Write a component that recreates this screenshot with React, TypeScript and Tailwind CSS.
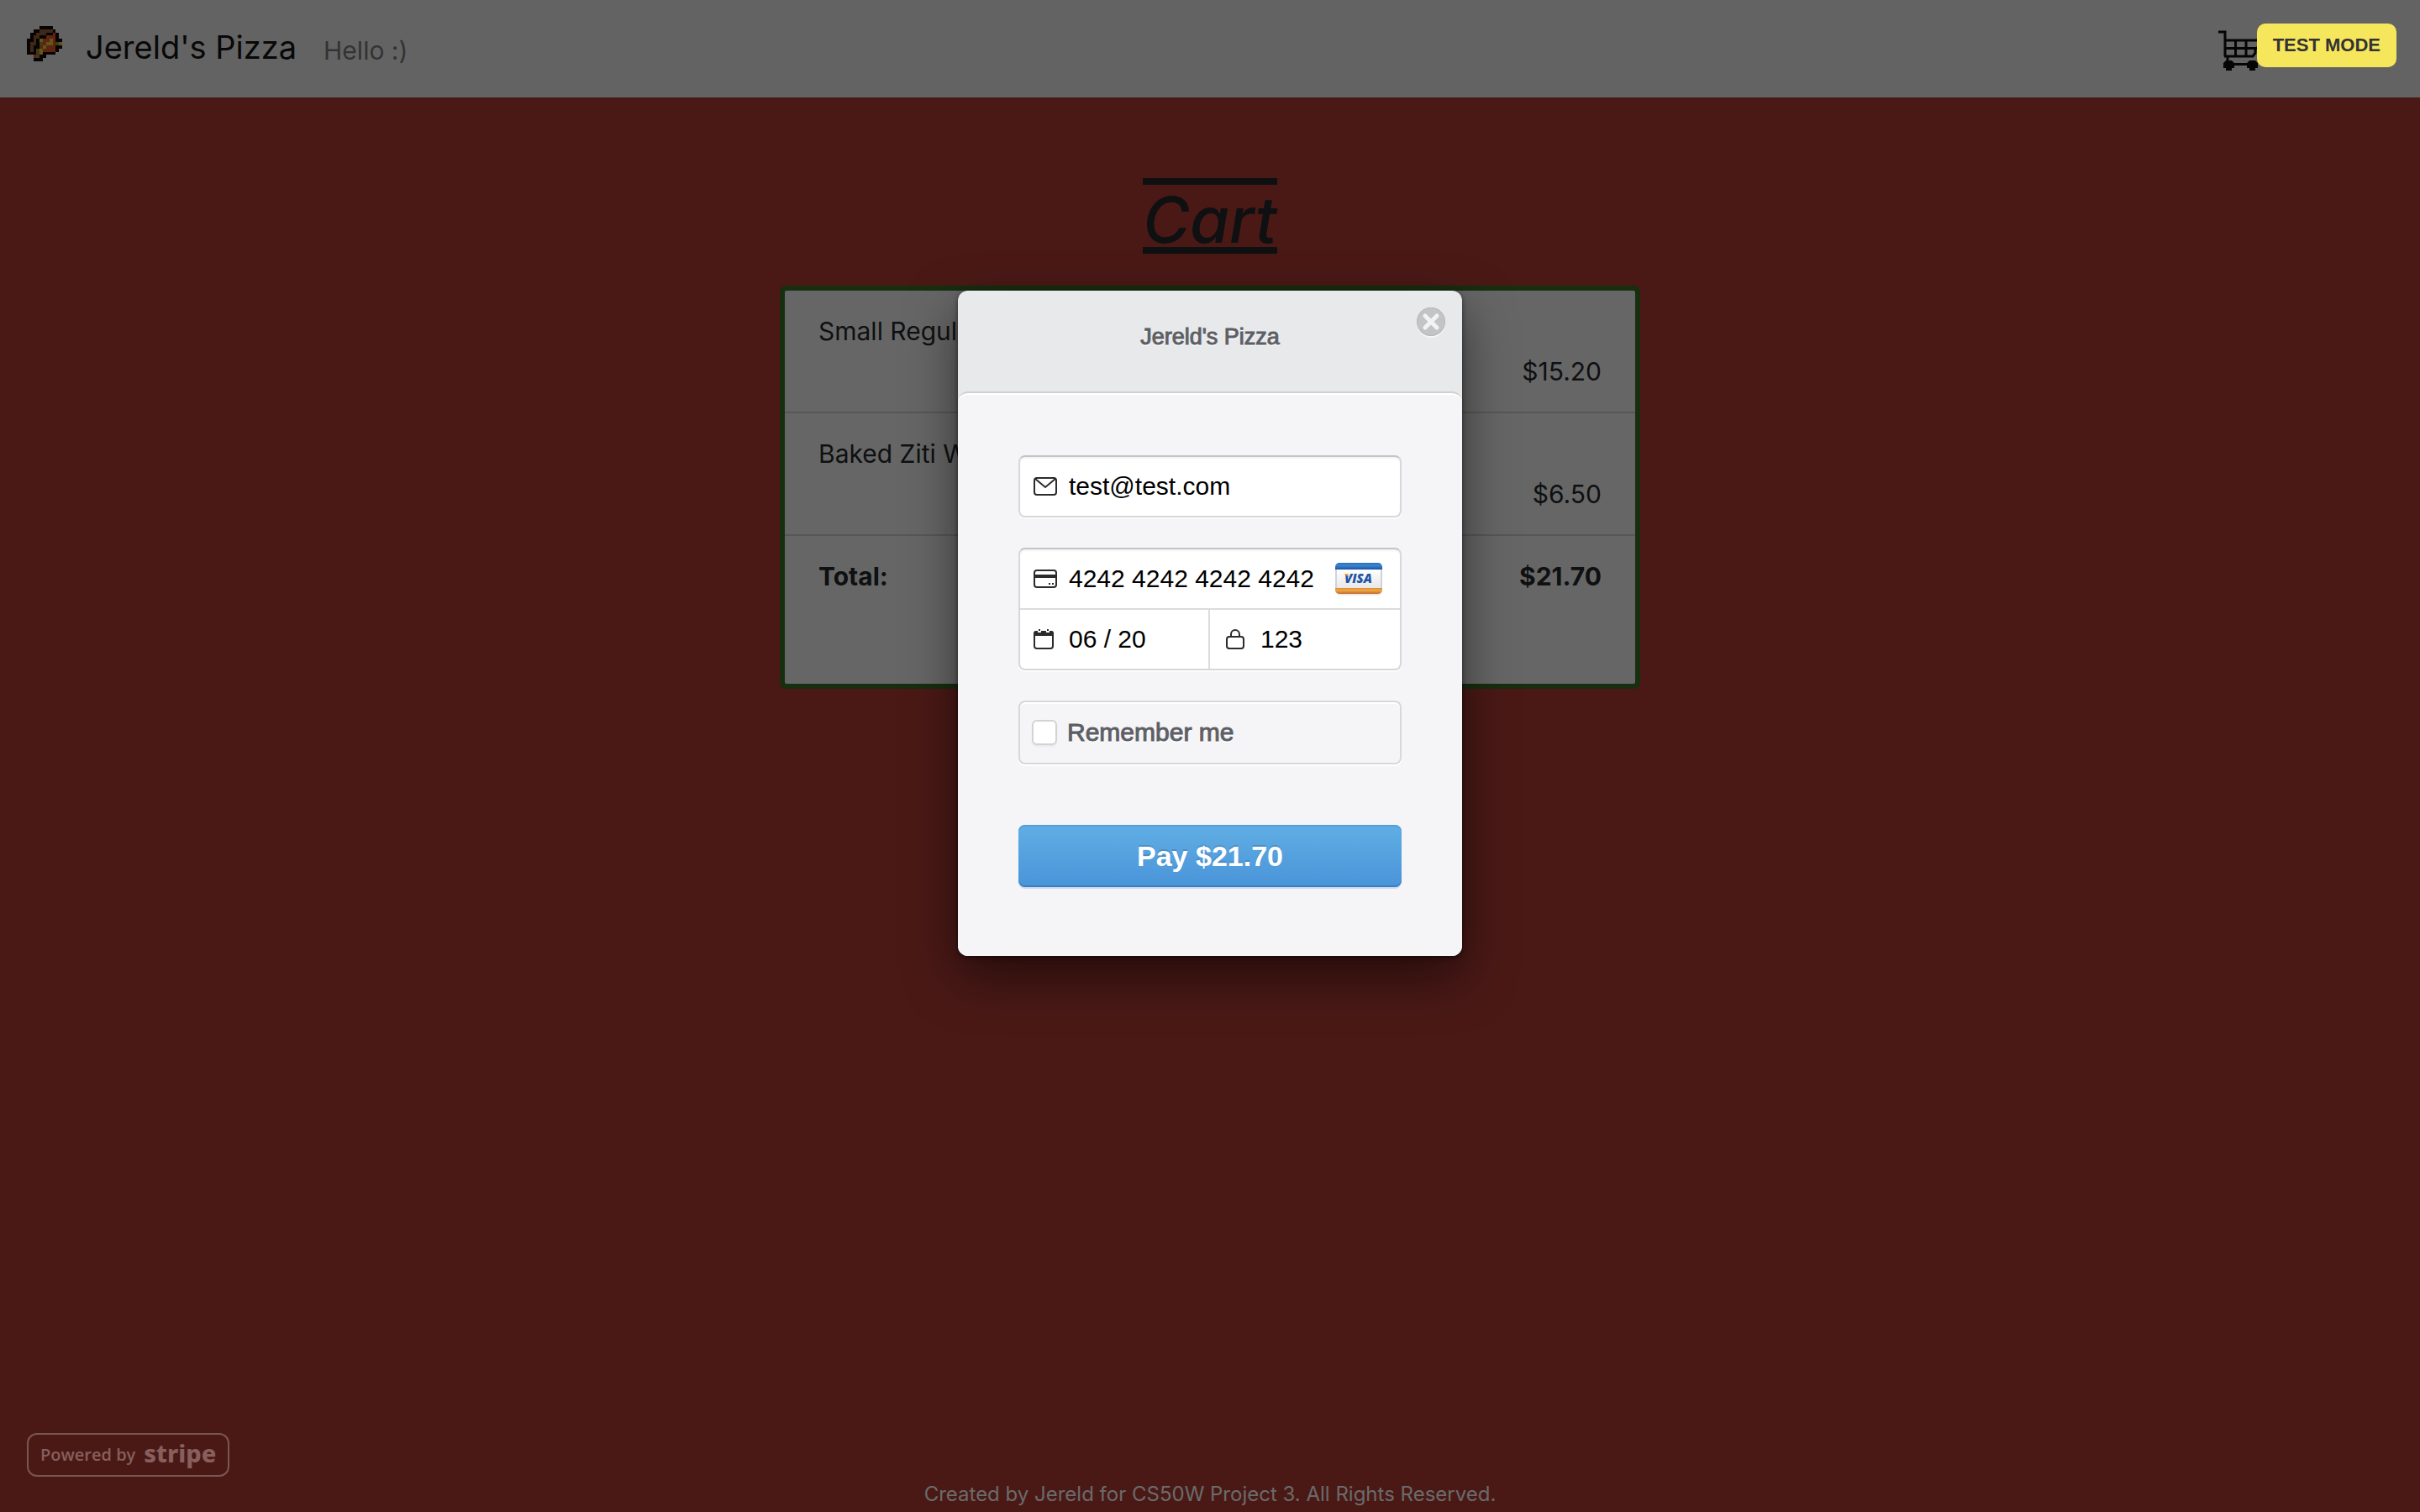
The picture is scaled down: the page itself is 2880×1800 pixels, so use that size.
import React from "react";

const PIXELS = [
  "....KKKK...",
  "..KKBBBBK..",
  ".KKBBBKKRK.",
  ".KBBKKRRRK.",
  "KKBKYRRYRKK",
  "KBBKGRYYRGY",
  "KBKKRYRRRKK",
  "KBKGYRRRRK.",
  "KKKRYKKKK..",
  "..RGKK.....",
  "..KKK......",
];
const FILL: Record<string, string> = {
  K: "#070403",
  B: "#3f2817",
  R: "#5e2410",
  G: "#33401a",
  Y: "#62551c",
};

function Pizza() {
  return (
    <svg viewBox="0 0 11 11" className="size-[42px]" shapeRendering="crispEdges" aria-hidden="true">
      {PIXELS.map((row, y) =>
        row.split("").map((c, x) =>
          c === "." ? null : <rect key={`${x}-${y}`} x={x} y={y} width="1" height="1" fill={FILL[c]} />
        )
      )}
    </svg>
  );
}

function CartIcon() {
  return (
    <svg viewBox="0 0 48 48" className="size-12" fill="none" stroke="#050505" strokeWidth="3" aria-hidden="true">
      <path d="M0 2h8v29M7 12h41M48 20l-4 2v5l-3 4H7M8 21.500h40M20.500 12v19M33 12v19M11 31v8M12 40.500h28" />
      <path d="M9 36h7l3 3v6h-3v3H9v-3H6v-6zM37 36h7l3 3v6h-3v3h-7v-3h-3v-6z" fill="#050505" stroke="none" />
    </svg>
  );
}

const iconClass = "shrink-0";

function Mail() {
  return (
    <svg width="28" height="24" viewBox="0 0 28 24" className={iconClass} fill="none" stroke="#2b2b2b" strokeWidth="2" aria-hidden="true">
      <rect x="1" y="2" width="26" height="20" rx="3" />
      <path d="M2 3l12 10L26 3" />
    </svg>
  );
}
function Card() {
  return (
    <svg width="28" height="24" viewBox="0 0 28 24" className={iconClass} fill="none" stroke="#2b2b2b" strokeWidth="2" aria-hidden="true">
      <rect x="1" y="2" width="26" height="20" rx="3" />
      <path d="M1 9h26" strokeWidth="4" />
      <path d="M18 18h2M22 18h2" />
    </svg>
  );
}
function Calendar() {
  return (
    <svg width="24" height="24" viewBox="0 0 24 24" className="mr-1 shrink-0" fill="none" stroke="#2b2b2b" strokeWidth="2" aria-hidden="true">
      <rect x="1" y="3" width="22" height="20" rx="3" />
      <path d="M0 8V5a3 3 0 0 1 3-3h18a3 3 0 0 1 3 3v3z" fill="#2b2b2b" stroke="none" />
      <path d="M7 0v4M17 0v4" stroke="#fff" strokeWidth="4" />
      <path d="M7 0v2M17 0v2" />
    </svg>
  );
}
function Lock() {
  return (
    <svg width="24" height="24" viewBox="0 0 24 24" className="mr-1 shrink-0" fill="none" stroke="#2b2b2b" strokeWidth="2" aria-hidden="true">
      <rect x="2" y="9" width="20" height="14" rx="3" />
      <path d="M7 9V6a5 5 0 0 1 10 0v3" />
    </svg>
  );
}

function Visa() {
  return (
    <svg width="58" height="40" viewBox="0 0 58 40" className="shrink-0" role="img" aria-label="Visa">
      <defs>
        <linearGradient id="vb" x2="0" y2="1">
          <stop stopColor="#2d6db8" /><stop offset=".4" stopColor="#3a86cf" /><stop offset="1" stopColor="#1c50a6" />
        </linearGradient>
        <linearGradient id="vo" x2="0" y2="1">
          <stop stopColor="#dd8a3a" /><stop offset=".4" stopColor="#eeaa42" /><stop offset="1" stopColor="#c4682a" />
        </linearGradient>
        <linearGradient id="vw" x2="0" y2="1">
          <stop stopColor="#fff" /><stop offset="1" stopColor="#e9e7e8" />
        </linearGradient>
      </defs>
      <rect x="1" y="3" width="56" height="37" rx="6" fill="#000" opacity=".08" />
      <rect x="1" y="1" width="56" height="37" rx="5" fill="#cfd3da" />
      <rect x="3" y="9" width="52" height="22" fill="url(#vw)" />
      <path d="M1 9V6a5 5 0 0 1 5-5h46a5 5 0 0 1 5 5v3z" fill="url(#vb)" />
      <path d="M1 31v2a5 5 0 0 0 5 5h46a5 5 0 0 0 5-5v-2z" fill="url(#vo)" />
      <text x="12" y="25" className="font-['Open_Sans',sans-serif] text-[15px] font-extrabold italic" fill="#1f55a5">VISA</text>
      <path d="M11 14h5l2 5c-2-2-4-4-7-5z" fill="#eda33b" />
    </svg>
  );
}

const fieldInput =
  "w-full min-w-0 bg-transparent font-['Liberation_Sans',Arial,sans-serif] text-[30px] leading-9 text-black outline-none";

function Field({ label, value, icon, children, className = "pl-4" }: { label: string; value: string; icon: React.ReactNode; children?: React.ReactNode; className?: string }) {
  return (
    <label className={`flex h-[70px] items-center gap-3.5 pr-5 ${className}`}>
      {icon}
      <input aria-label={label} defaultValue={value} className={fieldInput} />
      {children}
    </label>
  );
}

function CartRow({ name, price }: { name: string; price: string }) {
  return (
    <li className="border-b-2 border-[#575757] px-10 py-6">
      <p>{name}</p>
      <p className="text-right">{price}</p>
    </li>
  );
}

const box = "rounded-lg border-2 border-[#d8d8da] border-t-[#c4c4c6] bg-white shadow-[0_2px_0_#fbfbfc,inset_0_2px_2px_#0000000d]";

export default function App() {
  return (
    <div className="relative flex min-h-screen flex-col bg-[#4a1916] font-[Inter,sans-serif] text-[30px] leading-[48px] text-[#0e1011]">
      <header className="flex h-[116px] items-center bg-[#636363] px-8">
        <a href="#home" className="flex items-center gap-7 pb-1 text-[38px] text-[#080808]">
          <span className="-mt-2"><Pizza /></span>
          Jereld's Pizza
        </a>
        <span className="ml-8 mt-1 text-[#333]">Hello :)</span>
        <a href="#cart" aria-label="Cart" className="ml-auto mr-[160px] mt-1"><CartIcon /></a>
      </header>

      <main className="flex flex-1 flex-col items-center pt-24">
        <h1 className="mb-[38px] border-y-8 border-[#0e1011] pt-2 text-[76px] leading-[66px] font-medium italic">Cart</h1>
        <section className="w-[1024px] rounded-lg border-6 border-[#172e0f] bg-[#666]">
          <ul>
            <CartRow name="Small Regular Pizza" price="$15.20" />
            <CartRow name="Baked Ziti With Meatballs" price="$6.50" />
            <li className="flex justify-between px-10 pt-6 pb-[104px] font-bold">
              <span>Total:</span>
              <span>$21.70</span>
            </li>
          </ul>
        </section>
      </main>

      <footer className="text-center text-[24px] leading-[42px] text-[#6b6b6b]">
        Created by Jereld for CS50W Project 3. All Rights Reserved.
      </footer>

      <span className="absolute top-7 right-7 rounded-[10px] bg-[#f6e65c] px-[19px] font-['Liberation_Sans',Arial,sans-serif] text-[22px] leading-[52px] font-bold text-[#333]">
        TEST MODE
      </span>

      <a href="#stripe" className="absolute bottom-[42px] left-8 flex h-[52px] items-center gap-2.5 rounded-xl border-2 border-[#7a5553] px-3.5 font-['Open_Sans',sans-serif] text-[#875f5d]">
        <span className="text-[20px] font-semibold">Powered by</span>
        <span className="-mt-1 font-['Noto_Sans',sans-serif] text-[29px] leading-8 font-extrabold">stripe</span>
      </a>

      <div
        role="dialog"
        aria-label="Jereld's Pizza checkout"
        className="absolute top-[346px] left-1/2 w-[600px] -translate-x-1/2 overflow-hidden rounded-xl bg-[#e8e9eb] font-['Liberation_Sans',Arial,sans-serif] shadow-[0_24px_60px_#00000080,0_2px_6px_#00000080]"
      >
        <div className="relative h-[120px] pt-8 text-center">
          <h2 className="text-[27px] leading-[46px] text-[#5e5f66] [-webkit-text-stroke:1px_#5e5f66] [text-shadow:0_2px_0_#fff]">Jereld's Pizza</h2>
          <button type="button" aria-label="Close" className="absolute top-5 right-5 size-[34px] rounded-full bg-[#c3c4c6] shadow-[0_2px_0_#f6f6f7,inset_0_0_0_1px_#b8b9bb]">
            <svg viewBox="0 0 34 34" fill="none" stroke="#f3f3f4" strokeWidth="5" strokeLinecap="round" aria-hidden="true">
              <path d="M10 10l14 14M24 10L10 24" />
            </svg>
          </button>
        </div>
        <form className="rounded-t-xl border-t-2 border-[#d0d0d1] bg-[#f5f5f7] px-18 pt-[74px] pb-[82px] shadow-[inset_0_2px_0_#fff]">
          <div className={box}>
            <Field label="Email" value="test@test.com" icon={<Mail />} />
          </div>
          <div className={`mt-9 ${box}`}>
            <Field label="Card number" value="4242 4242 4242 4242" icon={<Card />}><Visa /></Field>
            <div className="grid grid-cols-2 border-t-2 border-[#dcdcde]">
              <Field label="Expiry" value="06 / 20" icon={<Calendar />} className="border-r-2 border-[#dcdcde] pl-4" />
              <Field label="Security code" value="123" icon={<Lock />} className="pl-[18px]" />
            </div>
          </div>
          <label className="mt-9 flex h-[76px] items-center gap-3 rounded-lg border-2 border-[#d8d8da] pl-3.5 text-[30px] text-[#5e5f66] shadow-[0_2px_0_#fff,inset_0_2px_0_#fff] [-webkit-text-stroke:1px_#5e5f66] [text-shadow:0_2px_0_#fff]">
            <input type="checkbox" className="size-[30px] appearance-none rounded-md border-2 border-[#d3d3d5] bg-white shadow-[0_2px_2px_#0000000d]" />
            Remember me
          </label>
          <button
            type="button"
            className="mt-18 h-[74px] w-full rounded-lg bg-linear-to-b from-[#60aee4] to-[#4a94d9] text-[34px] font-bold text-white shadow-[0_2px_0_#c9d9e9,inset_0_2px_0_#559fd6,inset_0_-2px_0_#3f7dc4] [text-shadow:0_-2px_0_#00000026]"
          >
            Pay $21.70
          </button>
        </form>
      </div>
    </div>
  );
}
